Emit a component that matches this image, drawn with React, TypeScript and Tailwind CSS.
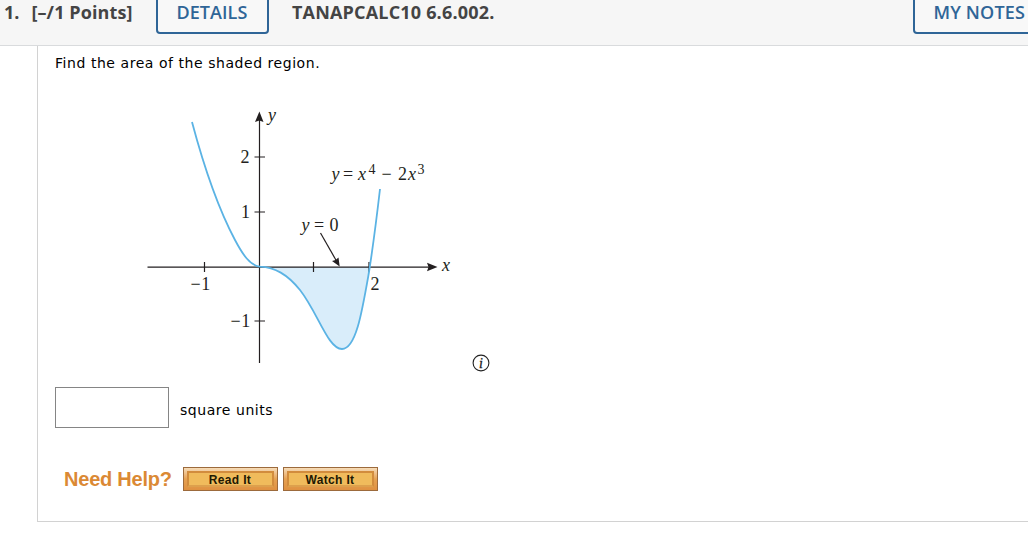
const outlineButton =
  "-mt-2.5 h-[44px] shrink-0 rounded border-2 border-[#2f6597] bg-[#f8f8f8] text-left leading-[38px] font-semibold whitespace-nowrap text-[#2f6597]";

const helpButton =
  "flex h-6 w-[95px] items-stretch border border-[#9c6a3c] bg-linear-to-b from-[#f6dcb8] via-[#e6a253] to-[#df9141] p-[3px]";

const curve =
  "M192 122 C204 167 218 208 235 240 C243 255 250 265.5 260 266.7 C275 267.5 287 274 300 290 C318 313 328 349 342 349 C356 349 362 312 369 272 C374 240 377 215 380 189";

const region =
  "M260 267 C275 267.5 287 274 300 290 C318 313 328 349 342 349 C356 349 362 312 369.5 267 Z";

function Graph() {
  return (
    <svg
      viewBox="140 102 320 270"
      className="h-[270px] w-[320px] shrink-0 font-['Liberation_Serif',serif] text-[18px]"
      fill="#231f20"
    >
      <path d={region} fill="#d9edfa" />

      <g stroke="#231f20" strokeWidth="1.2">
        <path d="M147.500 267.200H430M259.500 120V363" fill="none" />
        <path d="M204.500 262V272M313.500 262V272M369 262V272" fill="none" />
        <path d="M254.500 157H265M254.500 212H265M254.500 321H265" fill="none" />
        <path d="M320.500 233L336.500 261" fill="none" />
      </g>
      <path d="M259.400 111.500L263.500 122L259.400 120.500L255 122Z" />
      <path d="M437.500 267L427 271.300L428.500 267L427 262.700Z" />
      <path d="M339.700 266.500L332 261L335.600 260L338.500 257.500Z" />

      <path d={curve} fill="none" stroke="#5bb3e4" strokeWidth="1.8" />

      <text x="268" y="121" fontStyle="italic">y</text>
      <text x="442" y="271" fontStyle="italic">x</text>
      <text x="240.500" y="163">2</text>
      <text x="241" y="218">1</text>
      <text x="230.500" y="327">−1</text>
      <text x="190.500" y="290">−1</text>
      <text x="370.500" y="290">2</text>

      <text x="301.500" y="231" fontStyle="italic">y</text>
      <text x="314" y="231">=</text>
      <text x="329.500" y="231">0</text>

      <text x="331.500" y="180" fontStyle="italic">y</text>
      <text x="343" y="180">=</text>
      <text x="358" y="180" fontStyle="italic">x</text>
      <text x="368.500" y="174" fontSize="14">4</text>
      <text x="381.500" y="180">−</text>
      <text x="398" y="180">2</text>
      <text x="408" y="180" fontStyle="italic">x</text>
      <text x="417.500" y="174" fontSize="14">3</text>
    </svg>
  );
}

function InfoIcon() {
  return (
    <svg viewBox="0 0 18 18" className="ml-3 size-[18px]">
      <circle cx="9" cy="9" r="7.900" fill="none" stroke="#222" strokeWidth="1.100" />
      <text
        x="7"
        y="14"
        fill="#222"
        stroke="#222"
        strokeWidth="0.3"
        fontSize="14"
        fontStyle="italic"
        fontFamily="Liberation Serif, serif"
      >
        i
      </text>
    </svg>
  );
}

function HelpButton({ label }: { label: string }) {
  return (
    <button type="button" className={helpButton}>
      <span className="flex-1 border-2 border-[#d28c3d] border-b-[#dda04d] bg-[#f0bb5c] pr-px text-center text-[12px] leading-[14px] font-bold tracking-[0.33px] text-[#211803]">
        {label}
      </span>
    </button>
  );
}

export default function App() {
  return (
    <div className="h-[541px] w-full overflow-hidden bg-white font-['DejaVu_Sans',Verdana,sans-serif] text-[14px] tracking-[0.55px] text-black">
      <header className="flex h-[46px] items-start overflow-hidden border-b border-[#d9dbdd] bg-[#f6f6f6] font-['Open_Sans',sans-serif] text-[18px] leading-[25px] tracking-normal text-[#444]">
        <div className="flex w-[156px] shrink-0 gap-3 pl-1 font-bold whitespace-nowrap">
          <span>1.</span>
          <span className="tracking-[0.1px]">[–/1 Points]</span>
        </div>
        <button type="button" className={`${outlineButton} w-[113px] pl-[18.5px] tracking-[0.05px]`}>
          DETAILS
        </button>
        <h1 className="ml-[23px] w-[621px] shrink-0 font-bold tracking-[0.18px]">TANAPCALC10 6.6.002.</h1>
        <button type="button" className={`${outlineButton} w-[140px] pl-[18.5px] tracking-[0.15px]`}>
          MY NOTES
        </button>
      </header>

      <main className="ml-[37px] flex h-[476px] flex-col items-start border-b-[1.5px] border-l-[1.5px] border-[#d2d2d2] pl-[17px]">
        <p className="mt-[7px] h-[20px] leading-5">Find the area of the shaded region.</p>

        <div className="mt-[29px] flex items-end pl-[85px]">
          <Graph />
          <InfoIcon />
        </div>

        <label className="mt-[15px] flex items-center gap-[11px]">
          <input type="text" className="h-[41px] w-[114px] border border-[#858585] bg-white px-2 outline-none" />
          <span className="mt-[5px]">square units</span>
        </label>

        <div className="mt-[39px] flex items-center pl-[9px]">
          <span className="w-[119px] font-['Liberation_Sans',sans-serif] text-[20px] leading-6 font-bold tracking-[-0.22px] text-[#db8934]">
            Need Help?
          </span>
          <div className="flex gap-[5px] font-['Liberation_Sans',sans-serif]">
            <HelpButton label="Read It" />
            <HelpButton label="Watch It" />
          </div>
        </div>
      </main>
    </div>
  );
}
